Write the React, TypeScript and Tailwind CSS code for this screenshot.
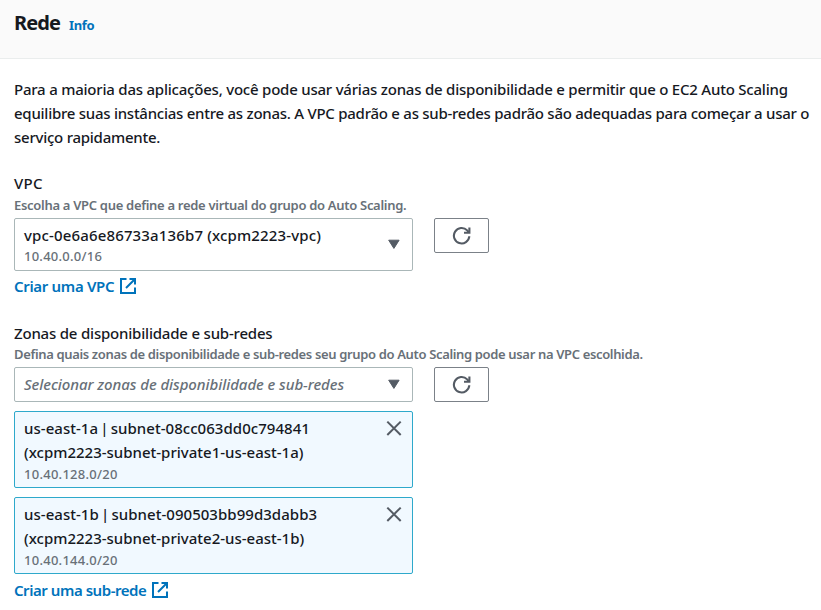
import type { ReactNode } from "react";

function Caret() {
  return (
    <svg className="h-[11px] w-[13px] shrink-0" viewBox="0 0 13 11">
      <path d="M1.7 1.2h10.4L6.9 9.4z" fill="#545b64" stroke="#545b64" strokeLinejoin="round" />
    </svg>
  );
}

function Close() {
  return (
    <svg className="h-4 w-4 shrink-0" viewBox="0 0 16 16" fill="none" stroke="#545b64" strokeWidth="2">
      <path d="M1.3 1.6l13.4 13.4M14.7 1.6L1.3 15" />
    </svg>
  );
}

function Refresh() {
  return (
    <button className="flex h-[35px] w-[55px] shrink-0 items-center justify-center rounded-[2px] border border-[#7b8188] bg-white">
      <svg className="h-5 w-5" viewBox="0 0 20 20" fill="none" stroke="#545b64" strokeWidth="2.1">
        <path d="M17.3 10.2A7.7 7.7 0 1 1 15.2 4.4L16.8 6.4" />
        <path d="M17.4 1.4v5.4h-5.4" />
      </svg>
    </button>
  );
}

function ExternalLink({ children }: { children: ReactNode }) {
  return (
    <a className="flex h-6 items-center gap-[6px] text-[15px] font-semibold text-[#0073bb]">
      {children}
      <svg className="h-4 w-4" viewBox="0 0 16 16" fill="none" stroke="#0073bb" strokeWidth="2">
        <path d="M6.5 1H1v14h14V9.5M9.5 1H15v5.5M15 1L6 10" />
      </svg>
    </a>
  );
}

function Token({ zone, name, cidr }: { zone: ReactNode; name: ReactNode; cidr: string }) {
  return (
    <div className="flex h-[77px] w-[399px] items-start justify-between rounded-[2px] border border-[#2ea9cb] bg-[#f1f9ff] pt-[4px] pr-[10px] pl-[9px]">
      <div>
        <p className="text-[15px] leading-6 tracking-[0.04px] [word-spacing:-1.8px]">{zone}</p>
        <p className="text-[15px] leading-6">{name}</p>
        <p className="text-[13px] leading-5 tracking-[0.26px] text-[#687078]">{cidr}</p>
      </div>
      <div className="pt-[4px]">
        <Close />
      </div>
    </div>
  );
}

export default function App() {
  return (
    <main className="h-[610px] w-[821px] overflow-hidden bg-white font-['Noto_Sans',sans-serif] font-medium whitespace-nowrap text-[#16191f]">
      <header className="flex h-[59px] items-baseline gap-[9px] border-b border-[#eaeded] bg-[#fafafa] pt-[9px] pl-[14px]">
        <h1 className="text-[20px] leading-7 font-bold tracking-[-0.9px]">Rede</h1>
        <a className="text-[13px] leading-5 font-bold tracking-[-0.4px] text-[#0073bb]">Info</a>
      </header>
      <div className="pt-[18px] pl-[14px]">
        <div className="text-[15px] leading-6">
          <p className="tracking-[-0.22px]">Para a maioria das aplicações, você pode usar várias zonas de disponibilidade e permitir que o EC2 Auto Scaling</p>
          <p className="tracking-[-0.258px]">equilibre suas instâncias entre as zonas. A VPC padrão e as sub-redes padrão são adequadas para começar a usar o</p>
          <p className="tracking-[-0.25px]">serviço rapidamente.</p>
        </div>
        <section className="pt-[22px]">
          <h2 className="text-[15px] leading-6 tracking-[0.3px]">VPC</h2>
          <p className="text-[13px] leading-5 font-semibold tracking-[-0.3px] text-[#687078]">Escolha a VPC que define a rede virtual do grupo do Auto Scaling.</p>
          <div className="flex items-start gap-[21px] pt-[3px]">
            <div className="-mb-px flex h-[53px] w-[399px] items-center justify-between rounded-[2px] border border-[#aab7b8] pr-[12px] pl-[9px]">
              <div>
                <p className="text-[15px] leading-6 tracking-[0.15px]">vpc-0e6a6e86733a136b7 (xcpm2223-vpc)</p>
                <p className="-mt-px text-[13px] leading-5 tracking-[0.25px] text-[#687078]">10.40.0.0/16</p>
              </div>
              <Caret />
            </div>
            <Refresh />
          </div>
          <div className="pt-[4px] tracking-[-0.32px]"><ExternalLink>Criar uma VPC</ExternalLink></div>
        </section>
        <section className="pt-[23px]">
          <h2 className="text-[15px] leading-6 tracking-[-0.2px]">Zonas de disponibilidade e sub-redes</h2>
          <p className="-mt-px text-[13px] leading-5 font-semibold tracking-[-0.35px] text-[#687078]">Defina quais zonas de disponibilidade e sub-redes seu grupo do Auto Scaling pode usar na VPC escolhida.</p>
          <div className="flex items-start gap-[21px] pt-[3px]">
            <div className="flex h-[35px] w-[399px] items-center justify-between rounded-[2px] border border-[#aab7b8] pr-[12px] pl-[9px]">
              <span className="text-[15px] tracking-[-0.07px] text-[#687078] italic">Selecionar zonas de disponibilidade e sub-redes</span>
              <Caret />
            </div>
            <Refresh />
          </div>
          <div className="flex flex-col gap-[9px] pt-[9px]">
            <Token zone="us-east-1a | subnet-08cc063dd0c794841" name="(xcpm2223-subnet-private1-us-east-1a)" cidr="10.40.128.0/20" />
            <Token zone="us-east-1b | subnet-090503bb99d3dabb3" name="(xcpm2223-subnet-private2-us-east-1b)" cidr="10.40.144.0/20" />
          </div>
          <div className="pt-[4px] tracking-[-0.45px]"><ExternalLink>Criar uma sub-rede</ExternalLink></div>
        </section>
      </div>
    </main>
  );
}
